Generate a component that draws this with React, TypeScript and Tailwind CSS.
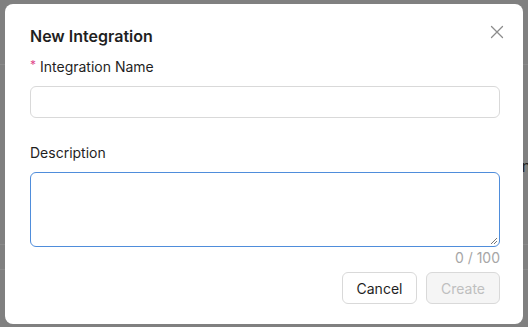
import React from "react";

export default function App() {
  return (
    <div
      className="relative w-[528px] h-[327px] overflow-hidden bg-[#808080]"
      style={{ fontFamily: "Inter, 'Noto Sans', sans-serif" }}
    >
      {/* faint background page under overlay */}
      <div className="absolute inset-0">
        <div className="mt-[64px] h-px w-full bg-[#8a8a8a]" />
        <div className="mt-[179px] h-px w-full bg-[#8a8a8a]" />
        <div className="mt-[24px] h-px w-full bg-[#8a8a8a]" />
        <div className="absolute right-[-3px] top-[154px] text-[16px] text-[#222]">n</div>
      </div>

      {/* modal */}
      <div className="absolute left-[5px] top-[4px] w-[518px] h-[320px] rounded-[8px] bg-white pl-[25px] pr-[23px] pt-[20px] pb-[20px] flex flex-col">
        <div className="flex items-center justify-between h-[24px]">
          <div className="text-[16px] font-semibold text-[#1f1f1f] leading-[24px]">New Integration</div>
        </div>
        <button className="absolute right-[19px] top-[21px] w-[14px] h-[14px] flex items-center justify-center">
          <svg width="14" height="14" viewBox="0 0 14 14" fill="none">
            <path d="M1.5 1.5 L12.5 12.5 M12.5 1.5 L1.5 12.5" stroke="#8c8c8c" strokeWidth="1.3" strokeLinecap="round" />
          </svg>
        </button>

        <div className="mt-[8px] h-[22px] flex items-center text-[14px] leading-[22px] text-[#1f1f1f]">
          <span className="text-[#e0498a] text-[12px] mr-[4px] relative top-[-2px]">*</span>
          Integration Name
        </div>
        <div className="mt-[8px] h-[32px] rounded-[6px] border border-[#d9d9d9] bg-white" />

        <div className="mt-[24px] h-[22px] text-[14px] leading-[22px] text-[#1f1f1f]">Description</div>
        <div className="mt-[8px] h-[76px] rounded-[6px] border border-[#4f8ddb] bg-white relative">
          <svg className="absolute right-[1px] bottom-[1px]" width="8" height="8" viewBox="0 0 8 8">
            <path d="M7 1 L1 7 M7 4 L4 7" stroke="#777" strokeWidth="1" />
          </svg>
        </div>
        <div className="h-[22px] text-right text-[14px] leading-[22px] text-[#a6a6a6]">0 / 100</div>

        <div className="mt-[3px] flex justify-end gap-[9px]">
          <button className="h-[32px] w-[75px] rounded-[6px] border border-[#d9d9d9] bg-white text-[14px] text-[#1f1f1f]">
            Cancel
          </button>
          <button className="h-[32px] w-[74px] rounded-[6px] border border-[#d9d9d9] bg-[#f5f5f5] text-[14px] text-[#bfbfbf]">
            Create
          </button>
        </div>
      </div>
    </div>
  );
}
